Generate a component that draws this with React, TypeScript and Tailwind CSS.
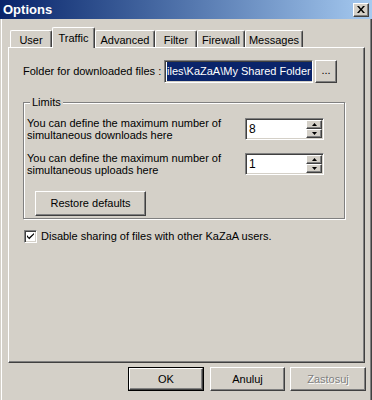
import React from "react";

const raised =
  "border-t border-l border-t-white border-l-white border-b border-r border-b-[#404040] border-r-[#404040] shadow-[inset_-1px_-1px_0_#808080,inset_1px_1px_0_#d4d0c8]";
const sunken =
  "border-t border-l border-t-[#808080] border-l-[#808080] border-b border-r border-b-white border-r-white shadow-[inset_1px_1px_0_#404040,inset_-1px_-1px_0_#d4d0c8]";

function Tab({ label, w, selected }: { label: string; w: string; selected?: boolean }) {
  if (selected) {
    return (
      <div
        className={`${w} h-[21px] -mb-px relative z-10 bg-[#d4d0c8] border-t border-l border-t-white border-l-white border-r border-r-[#404040] shadow-[inset_-1px_0_0_#808080] rounded-t-[2px] flex items-start justify-center pt-[2px]`}
      >
        {label}
      </div>
    );
  }
  return (
    <div
      className={`${w} h-[17px] bg-[#d4d0c8] border-t border-l border-t-white border-l-white border-r border-r-[#404040] shadow-[inset_-1px_0_0_#808080] rounded-t-[2px] flex items-start justify-center pt-[1px]`}
    >
      {label}
    </div>
  );
}

function Spin({ value }: { value: string }) {
  return (
    <div className={`w-[79px] h-[22px] bg-white ${sunken} flex items-stretch p-[1px]`}>
      <div className="flex-1 pl-[2px] flex items-center text-[12px]">{value}</div>
      <div className="w-[16px] flex flex-col">
        <div className={`flex-1 bg-[#d4d0c8] ${raised} flex items-center justify-center`}>
          <svg width="5" height="3" viewBox="0 0 5 3">
            <path d="M2.5 0 L5 3 L0 3 Z" fill="#000" />
          </svg>
        </div>
        <div className={`flex-1 bg-[#d4d0c8] ${raised} flex items-center justify-center`}>
          <svg width="5" height="3" viewBox="0 0 5 3">
            <path d="M0 0 L5 0 L2.5 3 Z" fill="#000" />
          </svg>
        </div>
      </div>
    </div>
  );
}

export default function App() {
  return (
    <div className="w-[372px] h-[400px] bg-[#d4d0c8] text-[11px] text-black font-['Liberation_Sans',Arial,sans-serif] flex flex-col overflow-hidden shadow-[inset_1px_0_0_#d4d0c8,inset_2px_0_0_#fff,inset_-1px_0_0_#404040,inset_-2px_0_0_#808080]">
      <div className="h-[19px] flex-none bg-gradient-to-r from-[#0a246a] to-[#a6caf0] flex items-center justify-between pl-[3px] pr-[3px]">
        <span className="text-white font-bold text-[13px]">Options</span>
        <div className={`w-[16px] h-[14px] bg-[#d4d0c8] ${raised} flex items-center justify-center`}>
          <svg width="8" height="7" viewBox="0 0 8 7">
            <path d="M0 0 L2 0 L4 2.5 L6 0 L8 0 L5 3.5 L8 7 L6 7 L4 4.5 L2 7 L0 7 L3 3.5 Z" fill="#000" />
          </svg>
        </div>
      </div>

      <div className="flex-1 flex flex-col pl-[8px] pr-[7px]">
        <div className="mt-[8px] h-[20px] flex items-end pl-[2px] relative z-10">
          <Tab label="User" w="w-[42px]" />
          <Tab label="Traffic" w="w-[43px]" selected />
          <Tab label="Advanced" w="w-[60px]" />
          <Tab label="Filter" w="w-[42px]" />
          <Tab label="Firewall" w="w-[48px]" />
          <Tab label="Messages" w="w-[58px]" />
        </div>

        <div className="h-[316px] flex-none border-t border-l border-t-white border-l-white border-b border-r border-b-[#404040] border-r-[#404040] shadow-[inset_-1px_-1px_0_#808080] pl-[14px] pt-[12px] flex flex-col">
          <div className="flex items-center">
            <span className="w-[141px] whitespace-nowrap">Folder for downloaded files :</span>
            <div className={`w-[149px] h-[23px] bg-white ${sunken} flex items-center pl-[2px] overflow-hidden`}>
              <span className="bg-[#0a246a] text-white whitespace-nowrap leading-[19px] pr-px">
                iles\KaZaA\My Shared Folder
              </span>
            </div>
            <button className={`ml-[2px] w-[22px] h-[23px] bg-[#d4d0c8] ${raised} flex items-center justify-center pb-[2px]`}>
              ...
            </button>
          </div>

          <div className="relative mt-[19px] w-[322px] h-[117px] border border-[#808080] shadow-[inset_1px_1px_0_#fff,1px_1px_0_#fff] pl-[3px] pt-[14px] flex flex-col">
            <span className="absolute -top-[8px] left-[6px] bg-[#d4d0c8] px-[2px] leading-[14px]">Limits</span>
            <div className="flex items-center">
              <div className="w-[218px] leading-[12px]">
                You can define the maximum number of
                <br />
                simultaneous downloads here
              </div>
              <Spin value="8" />
            </div>
            <div className="flex items-center mt-[11px]">
              <div className="w-[218px] leading-[12px]">
                You can define the maximum number of
                <br />
                simultaneous uploads here
              </div>
              <Spin value="1" />
            </div>
            <button className={`mt-[15px] ml-[8px] w-[111px] h-[25px] bg-[#d4d0c8] ${raised} flex items-center justify-center`}>
              Restore defaults
            </button>
          </div>

          <label className="mt-[9px] ml-px flex items-center">
            <span className={`w-[13px] h-[13px] bg-white ${sunken} flex items-center justify-center`}>
              <svg width="7" height="7" viewBox="0 0 7 7">
                <path d="M0 2 L0 4 L2 6 L2 6.5 L7 1.5 L7 0 L2 4.5 Z" fill="#000" />
              </svg>
            </span>
            <span className="ml-[4px]">Disable sharing of files with other KaZaA users.</span>
          </label>
        </div>

        <div className="mt-[4px] -mr-px flex justify-end">
          <button className="w-[76px] h-[24px] border border-black">
            <div className={`w-full h-full bg-[#d4d0c8] ${raised} flex items-center justify-center`}>OK</div>
          </button>
          <button className={`ml-[6px] w-[75px] h-[24px] bg-[#d4d0c8] ${raised} flex items-center justify-center`}>
            Anuluj
          </button>
          <button className={`ml-[5px] w-[76px] h-[24px] bg-[#d4d0c8] ${raised} flex items-center justify-center text-[#808080] [text-shadow:1px_1px_0_#fff]`}>
            Zastosuj
          </button>
        </div>
      </div>
    </div>
  );
}
